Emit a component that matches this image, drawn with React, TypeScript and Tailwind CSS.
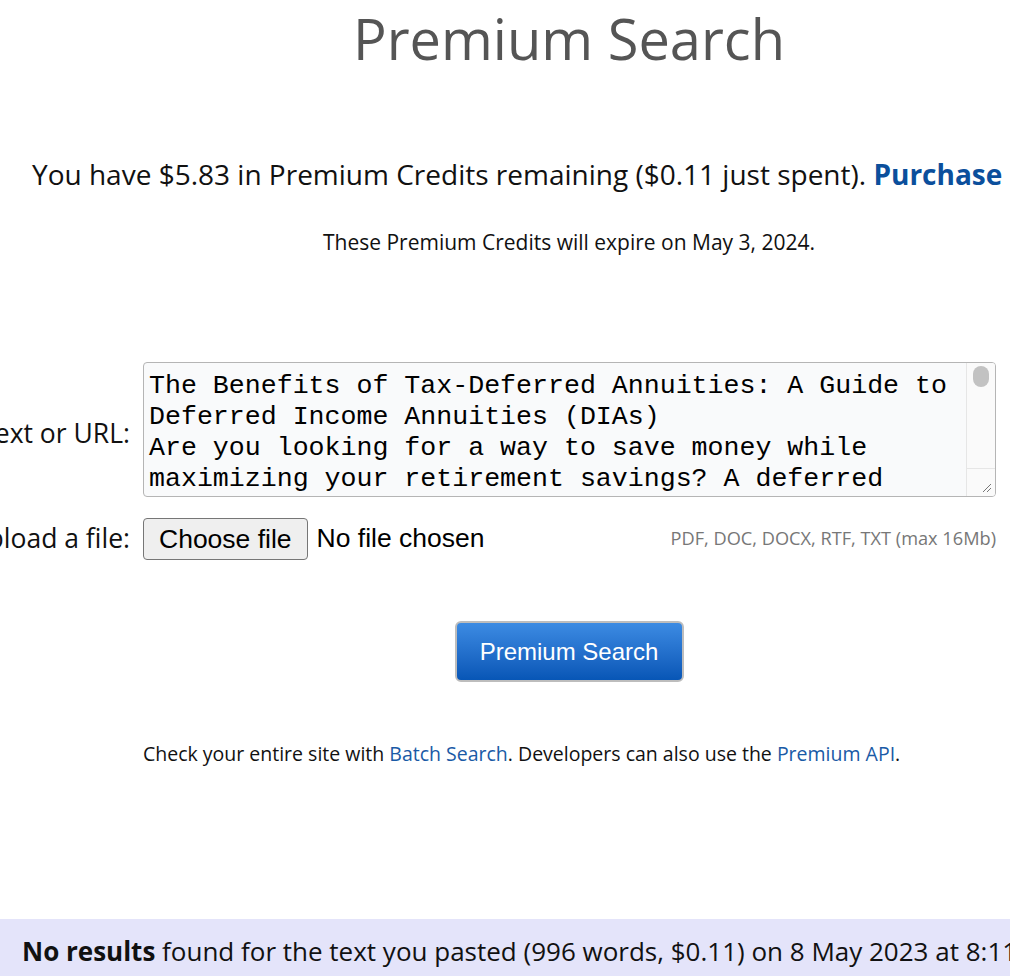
import { useState } from "react"

const sample = `The Benefits of Tax-Deferred Annuities: A Guide to
Deferred Income Annuities (DIAs)
Are you looking for a way to save money while
maximizing your retirement savings? A deferred`

export default function App() {
    const [text, setText] = useState(sample)

    return (
        <div className="w-[1010px] h-[976px] overflow-hidden bg-white font-['Open_Sans',sans-serif] text-[#111]">
            <div className="w-[1140px] -ml-[1px] flex flex-col">
                <h1 className="text-center text-[56px] leading-[76px] text-[#555] font-normal">Premium Search</h1>

                <p className="mt-[80px] pl-[33px] whitespace-nowrap text-[28px] leading-[36px]">
                    You have $5.83 in Premium Credits remaining ($0.11 just spent). <a href="#" className="font-bold text-[#0b4f9c]">Purchase more</a>
                </p>
                <p className="mt-[36px] text-center text-[21px] leading-[28px]">These Premium Credits will expire on May 3, 2024.</p>

                <div className="mt-[106px] grid grid-cols-[131px_853px_1fr] gap-x-[13px] gap-y-[21px] items-center">
                    <label className="flex justify-end whitespace-nowrap text-[26.5px] pt-[8px]">Text or URL:</label>
                    <div className="flex h-[135px] rounded-[4px] border border-[#b5b5b5] bg-[#f9fafb] overflow-hidden">
                        <textarea
                            value={text}
                            onChange={e => setText(e.target.value)}
                            className="flex-1 resize-none overflow-hidden bg-transparent pl-[5px] pt-[8px] font-['Liberation_Mono',monospace] text-[26.6px] leading-[31px] text-black outline-none"
                        />
                        <div className="w-[29px] flex flex-col border-l border-[#e6e6e6] bg-[#fafafa]">
                            <div className="mx-auto mt-[3px] h-[21px] w-[16px] rounded-full bg-[#c2c2c2]" />
                            <div className="flex-1" />
                            <div className="h-[28px] border-t border-[#e6e6e6] flex items-end justify-end pr-[3px] pb-[3px]">
                                <svg width="12" height="12" viewBox="0 0 12 12">
                                    <path d="M11 3L3 11M11 7L7 11" stroke="#777" strokeWidth="1" />
                                </svg>
                            </div>
                        </div>
                    </div>
                    <div className="pl-[8px] pt-[8px]">
                        <span className="inline-flex h-[20px] w-[20px] items-center justify-center rounded-full border-2 border-[#1a5aa6] text-[13px] font-bold text-[#1a5aa6]">?</span>
                    </div>

                    <label className="flex justify-end whitespace-nowrap text-[26.5px]">Upload a file:</label>
                    <div className="flex items-center font-['Liberation_Sans',Arial,sans-serif] text-[26.5px]">
                        <button className="h-[42px] rounded-[4px] border border-[#767676] bg-[#efefef] px-[15px] leading-none text-black">Choose file</button>
                        <span className="ml-[9px] text-black">No file chosen</span>
                        <span className="ml-auto font-['Open_Sans',sans-serif] text-[18.2px] text-[#777]">PDF, DOC, DOCX, RTF, TXT (max 16Mb)</span>
                    </div>
                    <div />
                </div>

                <div className="mt-[61px] flex justify-center">
                    <button className="h-[61px] w-[229px] rounded-[6px] border-2 border-[#bdbdbd] bg-gradient-to-b from-[#3c8be3] to-[#0756b6] font-['Liberation_Sans',Arial,sans-serif] text-[24px] text-white">
                        Premium Search
                    </button>
                </div>

                <p className="mt-[58px] pl-[144px] whitespace-nowrap text-[19.5px] leading-[28px]">
                    Check your entire site with <a href="#" className="text-[#1a5aa6]">Batch Search</a>. Developers can also use the <a href="#" className="text-[#1a5aa6]">Premium API</a>.
                </p>
            </div>

            <div className="mt-[151px] h-[80px] bg-[#e4e4fa] pl-[22px] pt-[14px] whitespace-nowrap text-[26px] leading-[36px]">
                <b>No results</b> found for the text you pasted (996 words, $0.11) on 8 May 2023 at 8:11 AM.
            </div>
        </div>
    )
}
